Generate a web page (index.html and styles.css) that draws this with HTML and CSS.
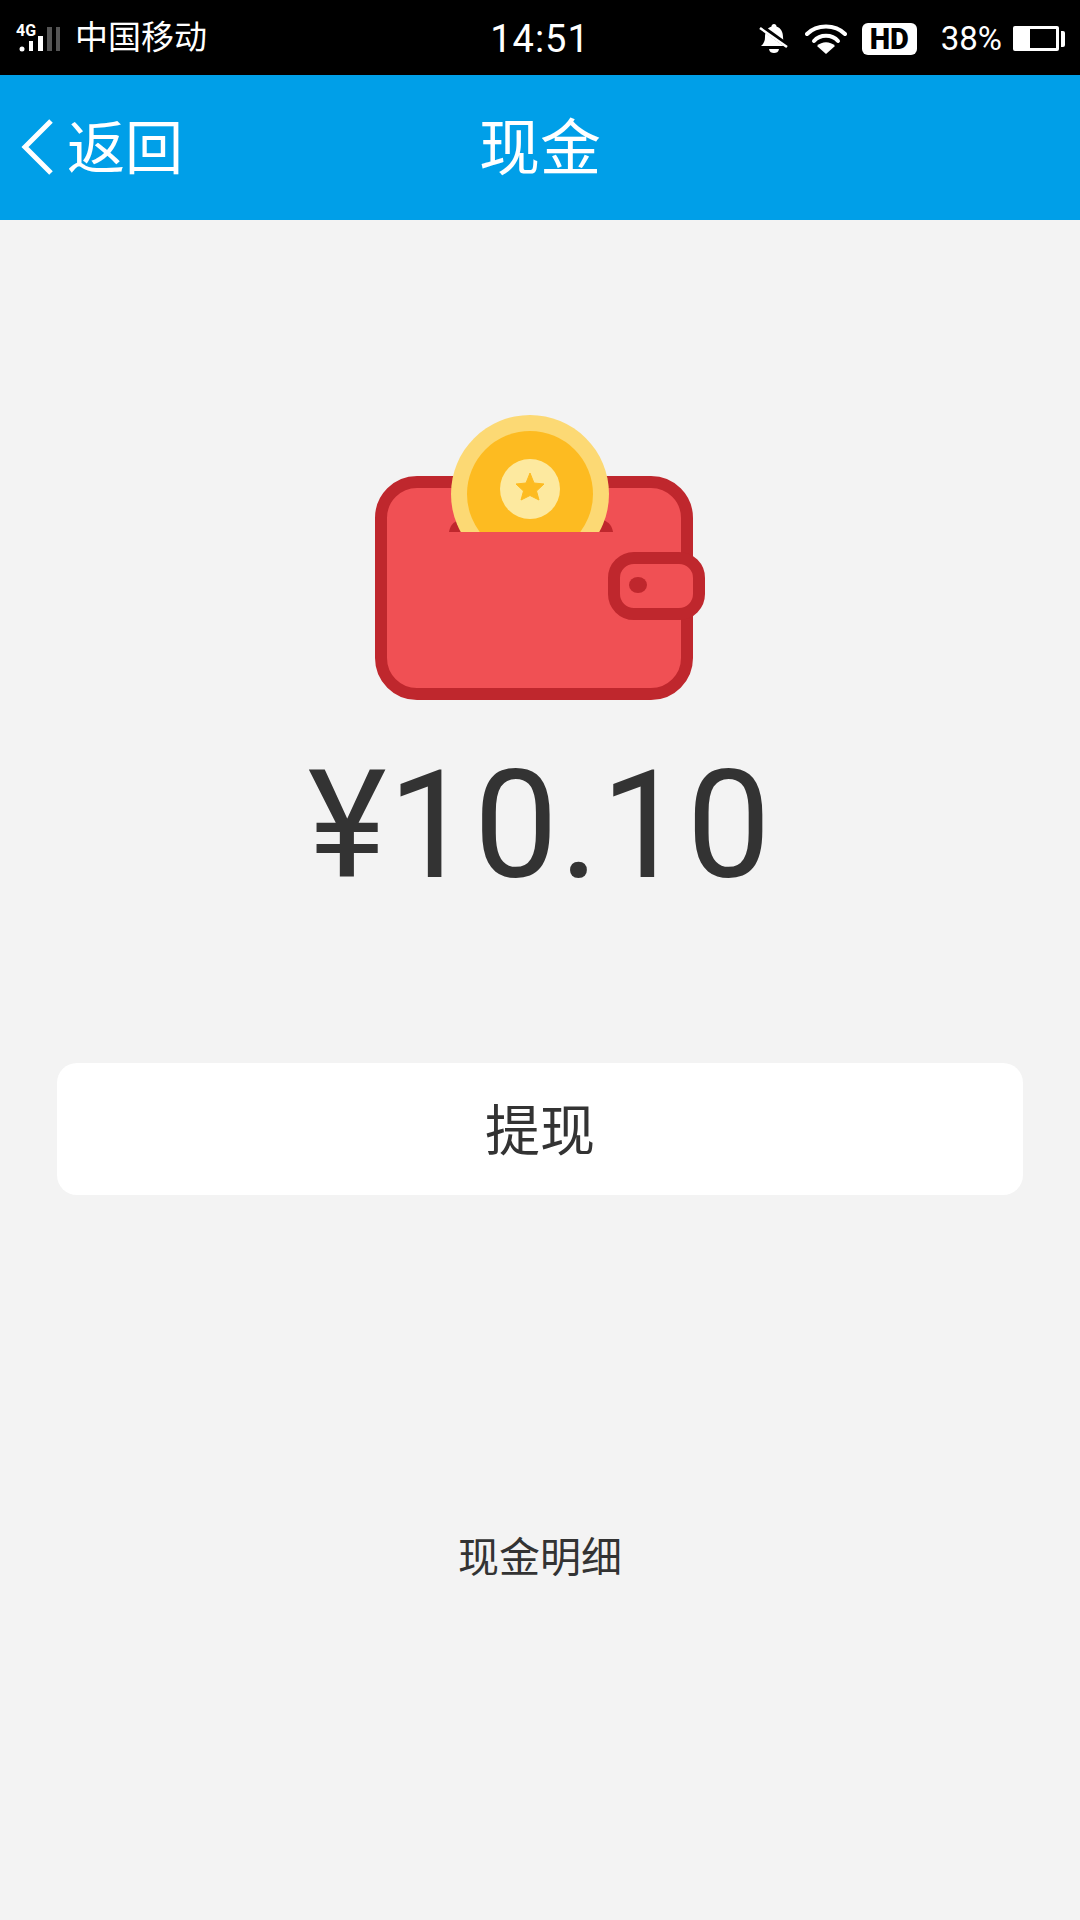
FILE: index.html
```html
<!DOCTYPE html>
<html lang="zh-CN">
<head>
    <meta charset="UTF-8">
    <meta name="viewport" content="width=device-width, initial-scale=1.0">
    <title>现金</title>
    <link rel="stylesheet" href="styles.css">
</head>
<body>

<div class="status-bar">
    <div class="status-left">
        <div class="signal">
            <span class="signal-label">4G</span>
            <svg class="signal-bars" width="46" height="30" viewBox="0 0 46 30">
                <circle cx="6" cy="25" r="2.500" fill="#fff"/>
                <rect x="13" y="17" width="4" height="10" fill="#fff"/>
                <rect x="22" y="12" width="5" height="15" fill="#fff"/>
                <rect x="31" y="3" width="5" height="24" fill="#555"/>
                <rect x="40" y="3" width="4" height="24" fill="#555"/>
            </svg>
        </div>
        <span class="carrier">中国移动</span>
    </div>
    <div class="status-time">14:51</div>
    <div class="status-right">
        <svg class="icon-bell" width="30" height="32" viewBox="0 0 30 32">
            <path d="M15 1c1.500 0 2.500 1 2.500 2.500 C22 5 24 9 24 14 C24 18 25 20 28 23 L2 23 C5 20 6 18 6 14 C6 9 8 5 12.500 3.500 C12.500 2 13.500 1 15 1Z" fill="#fff"/>
            <path d="M10 26 L20 26 C19.500 29 17.500 30 15 30 C12.500 30 10.500 29 10 26Z" fill="#fff"/>
            <path d="M1 3 L29 23" stroke="#000" stroke-width="5"/>
            <path d="M1 5 L28 24" stroke="#fff" stroke-width="2.500"/>
        </svg>
        <svg class="icon-wifi" width="42" height="32" viewBox="0 0 42 32">
            <path d="M2 11 C12 1 30 1 40 11" fill="none" stroke="#fff" stroke-width="4" stroke-linecap="round"/>
            <path d="M9 18 C15 11 27 11 33 18" fill="none" stroke="#fff" stroke-width="4" stroke-linecap="round"/>
            <path d="M21 31 L12 23 C17 18 25 18 30 23 Z" fill="#fff"/>
        </svg>
        <span class="hd-badge">HD</span>
        <span class="battery-text">38%</span>
        <div class="battery">
            <div class="battery-body"><div class="battery-fill"></div></div>
            <div class="battery-tip"></div>
        </div>
    </div>
</div>

<div class="nav-bar">
    <div class="nav-back">
        <svg class="back-arrow" width="36" height="58" viewBox="0 0 36 58">
            <path d="M31 3 L5 29 L31 55" fill="none" stroke="#fff" stroke-width="5"/>
        </svg>
        <span>返回</span>
    </div>
    <div class="nav-title">现金</div>
</div>

<div class="content">
    <svg class="wallet" width="332" height="290" viewBox="0 0 332 290">
        <rect x="6" y="72" width="306" height="212" rx="36" fill="#f05054" stroke="#bf272d" stroke-width="12"/>
        <path d="M74 122 C75 116 78 112 84 110 L228 110 C234 112 237 116 238 122 Z" fill="#bf272d"/>
        <clipPath id="coinClip"><rect x="0" y="0" width="332" height="122"/></clipPath>
        <g clip-path="url(#coinClip)">
            <circle cx="155" cy="84" r="79" fill="#fcd974"/>
            <circle cx="155" cy="84" r="63" fill="#fdbb21"/>
            <circle cx="155" cy="79" r="30" fill="#fde99f"/>
            <path d="M155 63 L159 73 L169 74 L161.500 81 L164 90 L155 85.500 L146 90 L148.500 81 L141 74 L151 73 Z" fill="#fdbb21" stroke="#fdbb21" stroke-width="1" stroke-linejoin="round"/>
        </g>
        <rect x="239" y="148" width="85" height="56" rx="20" fill="#f05054" stroke="#bf272d" stroke-width="12"/>
        <ellipse cx="263" cy="175" rx="9" ry="8" fill="#bf272d"/>
    </svg>
    <div class="amount">¥10.10</div>
    <div class="withdraw-btn">提现</div>
    <div class="detail-link">现金明细</div>
</div>

</body>
</html>
```

FILE: styles.css
```css
/* General */
body {
    margin: 0;
    padding: 0;
    background: #f3f3f3;
    font-family: Roboto, "Noto Sans CJK SC", sans-serif;
    color: #333;
}

/* Status bar */
.status-bar {
    height: 75px;
    background: #000;
    color: #fff;
    display: grid;
    grid-template-columns: 1fr auto 1fr;
    align-items: center;
    padding: 0 14px;
}

.status-left {
    display: flex;
    align-items: center;
    gap: 13px;
}

.signal {
    display: grid;
    width: 46px;
    height: 30px;
    margin: 3px 0 0 2px;
}

.signal-label {
    grid-area: 1 / 1;
    font-size: 16px;
    font-weight: 700;
    line-height: 14px;
}

.signal-bars {
    grid-area: 1 / 1;
    display: block;
}

.carrier {
    font-size: 33px;
    line-height: 40px;
}

.status-time {
    font-size: 38px;
    line-height: 44px;
    letter-spacing: 1px;
    padding-top: 3px;
}

.status-right {
    display: flex;
    align-items: center;
    justify-content: flex-end;
    padding: 2px 1px 0 0;
}

.icon-bell {
    margin-right: 16px;
}

.icon-wifi {
    margin-right: 15px;
}

.hd-badge {
    width: 55px;
    height: 32px;
    background: #fff;
    color: #000;
    border-radius: 6px;
    font-size: 29px;
    font-weight: 900;
    line-height: 32px;
    text-align: center;
    margin-right: 24px;
}

.battery-text {
    font-size: 33px;
    margin-right: 11px;
}

.battery {
    display: flex;
    align-items: center;
    gap: 2px;
}

.battery-body {
    width: 46px;
    height: 25px;
    box-sizing: border-box;
    background: #fff;
    padding: 3px 3px 3px 17px;
    border-radius: 2px;
}

.battery-fill {
    width: 100%;
    height: 100%;
    background: #000;
}

.battery-tip {
    width: 4px;
    height: 16px;
    background: #fff;
    border-radius: 0 2px 2px 0;
}

/* Nav bar */
.nav-bar {
    height: 145px;
    background: #009fe8;
    color: #fff;
    display: grid;
    grid-template-columns: 1fr auto 1fr;
    align-items: center;
}

.nav-back {
    display: flex;
    align-items: center;
    gap: 11px;
    padding-left: 20px;
    font-size: 58px;
    line-height: 70px;
}

.nav-back span {
    padding-top: 3px;
}

.back-arrow {
    margin-top: -2px;
}

.nav-title {
    font-size: 61px;
    line-height: 70px;
    padding-top: 2px;
}

/* Main content */
.content {
    display: flex;
    flex-direction: column;
    align-items: center;
}

.wallet {
    display: block;
    margin-top: 190px;
    margin-left: 2px;
}

.amount {
    font-size: 150px;
    line-height: 176px;
    margin-top: 38px;
    letter-spacing: 1.500px;
}

.withdraw-btn {
    width: 966px;
    height: 132px;
    margin-top: 149px;
    background: #fff;
    border-radius: 20px;
    font-size: 55px;
    line-height: 136px;
    text-align: center;
}

.detail-link {
    font-size: 41px;
    line-height: 50px;
    margin-top: 338px;
}
```
